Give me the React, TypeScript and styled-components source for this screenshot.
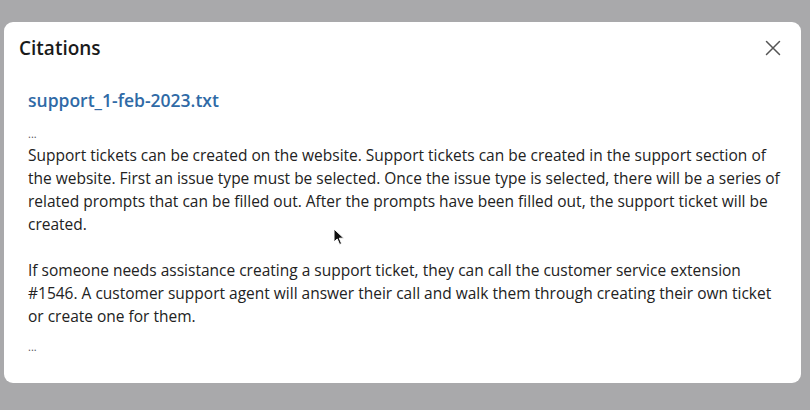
import styled, { createGlobalStyle } from "styled-components";

const GlobalStyle = createGlobalStyle`
  html, body {
    margin: 0;
    padding: 0;
    background: #a9a9ab;
  }
  body {
    font-family: "Open Sans", "Noto Sans", Arial, sans-serif;
  }
`;

const Backdrop = styled.div`
  width: 810px;
  height: 410px;
  padding: 22px 9px 0 4px;
  box-sizing: border-box;
  background: #a9a9ab;
`;

const Dialog = styled.div`
  position: relative;
  height: 361px;
  box-sizing: border-box;
  background: #ffffff;
  border-radius: 9px;
  padding: 14px 16px 0 15px;
`;

const Header = styled.div`
  display: flex;
  align-items: center;
  justify-content: space-between;
`;

const Title = styled.h2`
  margin: 0;
  font-size: 19px;
  font-weight: 600;
  color: #1a1a1a;
  line-height: 24px;
`;

const CloseButton = styled.button`
  display: flex;
  align-items: center;
  justify-content: center;
  width: 24px;
  height: 24px;
  padding: 0;
  border: none;
  background: transparent;
  color: #555;
  cursor: pointer;
`;

const Body = styled.div`
  padding: 28px 0 0 9px;
  width: 762px;
`;

const FileLink = styled.a`
  display: block;
  font-size: 17.5px;
  font-weight: 600;
  color: #2f6aa6;
  text-decoration: none;
  line-height: 24px;
`;

const Ellipsis = styled.div<{ $gap: number }>`
  margin-top: ${(p) => p.$gap}px;
  font-size: 11px;
  line-height: 12px;
  height: 12px;
  color: #555;
`;

const Excerpt = styled.p`
  margin: 4px 0 0;
  font-size: 15.5px;
  line-height: 23px;
  color: #222;
  white-space: pre-wrap;
`;

const Pointer = styled.svg`
  position: absolute;
  left: 329px;
  top: 206px;
`;

const excerpt =
  "Support tickets can be created on the website. Support tickets can be created in the support section of the website. First an issue type must be selected. Once the issue type is selected, there will be a series of related prompts that can be filled out. After the prompts have been filled out, the support ticket will be created.\n\nIf someone needs assistance creating a support ticket, they can call the customer service extension #1546. A customer support agent will answer their call and walk them through creating their own ticket or create one for them.";

export default function App() {
  return (
    <>
      <GlobalStyle />
      <Backdrop>
        <Dialog>
          <Header>
            <Title>Citations</Title>
            <CloseButton aria-label="Close">
              <svg width="16" height="16" viewBox="0 0 16 16">
                <path d="M1.5 1.5 L14.5 14.5 M14.5 1.5 L1.5 14.5" stroke="currentColor" strokeWidth="1.5" strokeLinecap="round" />
              </svg>
            </CloseButton>
          </Header>
          <Body>
            <FileLink href="#">support_1-feb-2023.txt</FileLink>
            <Ellipsis $gap={16}>...</Ellipsis>
            <Excerpt>{excerpt}</Excerpt>
            <Ellipsis $gap={13}>...</Ellipsis>
          </Body>
          <Pointer width="12" height="18" viewBox="0 0 12 18">
            <path d="M1 1 L1 14 L4.2 11 L6.6 16.5 L8.6 15.6 L6.3 10.2 L10.8 10.2 Z" fill="#111" stroke="#fff" strokeWidth="1" />
          </Pointer>
        </Dialog>
      </Backdrop>
    </>
  );
}
